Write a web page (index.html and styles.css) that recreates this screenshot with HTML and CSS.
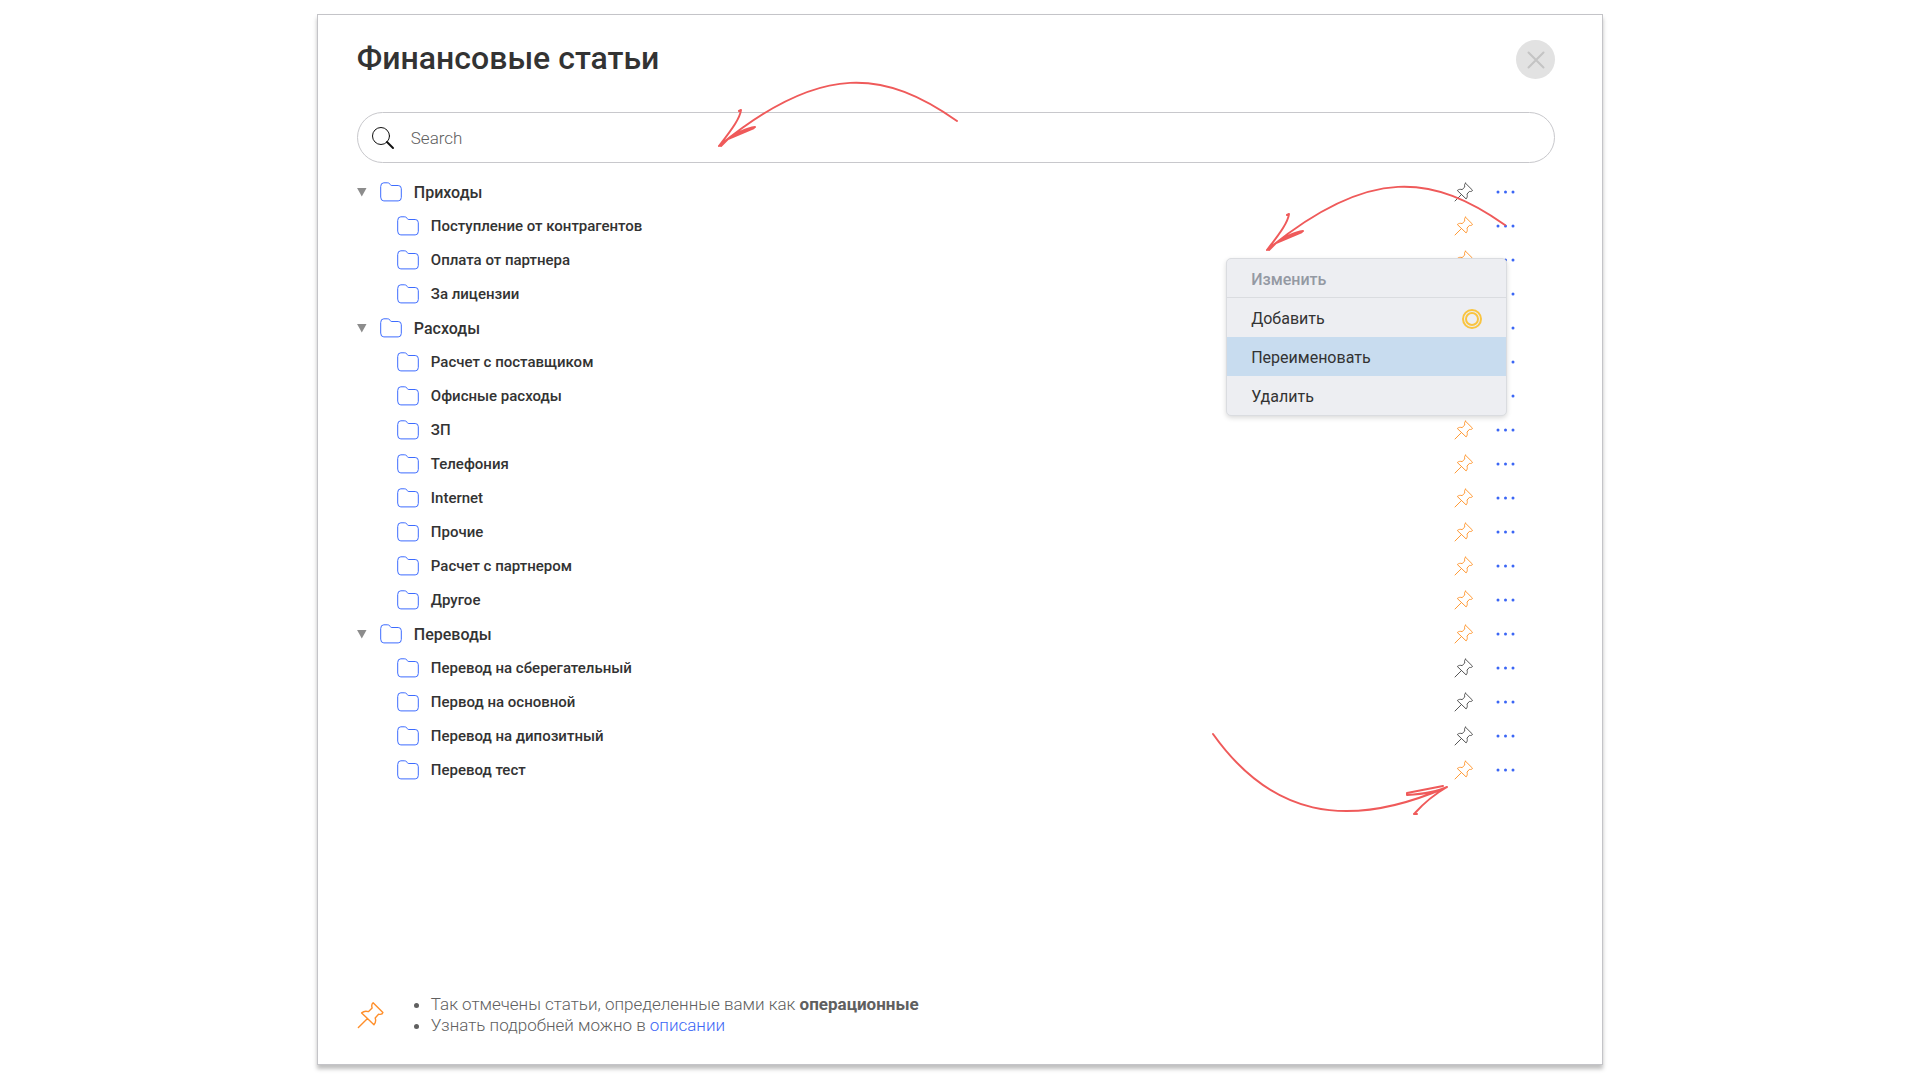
FILE: index.html
```html
<!DOCTYPE html>
<html lang="ru">
<head>
  <meta charset="UTF-8" />
  <meta name="viewport" content="width=device-width, initial-scale=1.0"/>
  <title>Финансовые статьи</title>
  <link rel="stylesheet" href="styles.css">
</head>
<body>

  <!-- Общие иконки -->
  <svg class="sprite" aria-hidden="true">
    <symbol id="folder" viewBox="0 0 22 20">
      <path d="M.7 4.2Q.7.8 3.8.8h3.4c1.6 0 2.6.6 3 1.700.3.8.8 1 1.600 1h6.400q3.100 0 3.100 3.200v8.800q0 3.400-3.100 3.400H3.800Q.7 18.900.7 15.500z"/>
    </symbol>
    <symbol id="pin" viewBox="0 0 20 20">
      <path d="M11.500 1.200l7 7c-.3 1.300-1.700 1.500-3.100 1.200l-2.400 2.700c.6 1.800.3 3.500-.9 4.800L3.300 8.500c1.400-1.200 3-1.500 4.800-.9l2.700-2.600c-.5-1.700-.3-3 .7-3.800zM7.500 12.500L1 19"/>
    </symbol>
    <symbol id="dots" viewBox="0 0 20 4">
      <circle cx="3" cy="2" r="1.500"/><circle cx="10.500" cy="2" r="1.500"/><circle cx="18" cy="2" r="1.500"/>
    </symbol>
    <symbol id="arrow" viewBox="0 0 246 70">
      <path d="M241 41C170-9 106-19 3 66M23 31l2-1c-1 8-8 18-22 36M39 47c-8 1-20 7-27 12l-7 7M38 48L12 59"/>
    </symbol>
  </svg>

  <main class="panel">
    <header class="panel-header">
      <h1>Финансовые статьи</h1>
      <button class="close" aria-label="Закрыть">
        <svg viewBox="0 0 18 18"><path d="M1.500 1.500l15 15M16.500 1.500l-15 15"/></svg>
      </button>
    </header>

    <div class="search">
      <label for="search" aria-label="Search">
        <svg viewBox="0 0 24 24"><circle cx="10" cy="10" r="8.500"/><path class="handle" d="M16 16l6 6"/></svg>
      </label>
      <input type="search" id="search" placeholder="Search" />
      <svg class="arrow arrow-search"><use href="#arrow"/></svg>
    </div>

    <!-- Дерево статей -->
    <ul class="tree">
      <li>
        <div class="row">
          <button class="toggle" aria-label="Свернуть"></button>
          <svg class="folder"><use href="#folder"/></svg>
          <span class="name">Приходы</span>
          <button class="pin off" aria-label="Отметить"><svg><use href="#pin"/></svg></button>
          <button class="more" aria-label="Меню"><svg><use href="#dots"/></svg></button>
        </div>
        <ul>
          <li class="row">
            <svg class="folder"><use href="#folder"/></svg>
            <span class="name">Поступление от контрагентов</span>
            <button class="pin" aria-label="Отметить"><svg><use href="#pin"/></svg></button>
            <button class="more" aria-label="Меню"><svg><use href="#dots"/></svg></button>
            <div class="menu">
              <div class="menu-title">Изменить</div>
              <button>Добавить
                <svg viewBox="0 0 20 20"><circle cx="10" cy="10" r="9"/><circle cx="10" cy="10" r="6"/></svg>
              </button>
              <button class="active">Переименовать</button>
              <button>Удалить</button>
            </div>
            <svg class="arrow arrow-menu"><use href="#arrow"/></svg>
          </li>
          <li class="row">
            <svg class="folder"><use href="#folder"/></svg>
            <span class="name">Оплата от партнера</span>
            <button class="pin" aria-label="Отметить"><svg><use href="#pin"/></svg></button>
            <button class="more" aria-label="Меню"><svg><use href="#dots"/></svg></button>
          </li>
          <li class="row">
            <svg class="folder"><use href="#folder"/></svg>
            <span class="name">За лицензии</span>
            <button class="pin" aria-label="Отметить"><svg><use href="#pin"/></svg></button>
            <button class="more" aria-label="Меню"><svg><use href="#dots"/></svg></button>
          </li>
        </ul>
      </li>
      <li>
        <div class="row">
          <button class="toggle" aria-label="Свернуть"></button>
          <svg class="folder"><use href="#folder"/></svg>
          <span class="name">Расходы</span>
          <button class="pin" aria-label="Отметить"><svg><use href="#pin"/></svg></button>
          <button class="more" aria-label="Меню"><svg><use href="#dots"/></svg></button>
        </div>
        <ul>
          <li class="row">
            <svg class="folder"><use href="#folder"/></svg>
            <span class="name">Расчет с поставщиком</span>
            <button class="pin" aria-label="Отметить"><svg><use href="#pin"/></svg></button>
            <button class="more" aria-label="Меню"><svg><use href="#dots"/></svg></button>
          </li>
          <li class="row">
            <svg class="folder"><use href="#folder"/></svg>
            <span class="name">Офисные расходы</span>
            <button class="pin" aria-label="Отметить"><svg><use href="#pin"/></svg></button>
            <button class="more" aria-label="Меню"><svg><use href="#dots"/></svg></button>
          </li>
          <li class="row">
            <svg class="folder"><use href="#folder"/></svg>
            <span class="name">ЗП</span>
            <button class="pin" aria-label="Отметить"><svg><use href="#pin"/></svg></button>
            <button class="more" aria-label="Меню"><svg><use href="#dots"/></svg></button>
          </li>
          <li class="row">
            <svg class="folder"><use href="#folder"/></svg>
            <span class="name">Телефония</span>
            <button class="pin" aria-label="Отметить"><svg><use href="#pin"/></svg></button>
            <button class="more" aria-label="Меню"><svg><use href="#dots"/></svg></button>
          </li>
          <li class="row">
            <svg class="folder"><use href="#folder"/></svg>
            <span class="name">Internet</span>
            <button class="pin" aria-label="Отметить"><svg><use href="#pin"/></svg></button>
            <button class="more" aria-label="Меню"><svg><use href="#dots"/></svg></button>
          </li>
          <li class="row">
            <svg class="folder"><use href="#folder"/></svg>
            <span class="name">Прочие</span>
            <button class="pin" aria-label="Отметить"><svg><use href="#pin"/></svg></button>
            <button class="more" aria-label="Меню"><svg><use href="#dots"/></svg></button>
          </li>
          <li class="row">
            <svg class="folder"><use href="#folder"/></svg>
            <span class="name">Расчет с партнером</span>
            <button class="pin" aria-label="Отметить"><svg><use href="#pin"/></svg></button>
            <button class="more" aria-label="Меню"><svg><use href="#dots"/></svg></button>
          </li>
          <li class="row">
            <svg class="folder"><use href="#folder"/></svg>
            <span class="name">Другое</span>
            <button class="pin" aria-label="Отметить"><svg><use href="#pin"/></svg></button>
            <button class="more" aria-label="Меню"><svg><use href="#dots"/></svg></button>
          </li>
        </ul>
      </li>
      <li>
        <div class="row">
          <button class="toggle" aria-label="Свернуть"></button>
          <svg class="folder"><use href="#folder"/></svg>
          <span class="name">Переводы</span>
          <button class="pin" aria-label="Отметить"><svg><use href="#pin"/></svg></button>
          <button class="more" aria-label="Меню"><svg><use href="#dots"/></svg></button>
        </div>
        <ul>
          <li class="row">
            <svg class="folder"><use href="#folder"/></svg>
            <span class="name">Перевод на сберегательный</span>
            <button class="pin off" aria-label="Отметить"><svg><use href="#pin"/></svg></button>
            <button class="more" aria-label="Меню"><svg><use href="#dots"/></svg></button>
          </li>
          <li class="row">
            <svg class="folder"><use href="#folder"/></svg>
            <span class="name">Первод на основной</span>
            <button class="pin off" aria-label="Отметить"><svg><use href="#pin"/></svg></button>
            <button class="more" aria-label="Меню"><svg><use href="#dots"/></svg></button>
          </li>
          <li class="row">
            <svg class="folder"><use href="#folder"/></svg>
            <span class="name">Перевод на дипозитный</span>
            <button class="pin off" aria-label="Отметить"><svg><use href="#pin"/></svg></button>
            <button class="more" aria-label="Меню"><svg><use href="#dots"/></svg></button>
          </li>
          <li class="row">
            <svg class="folder"><use href="#folder"/></svg>
            <span class="name">Перевод тест</span>
            <button class="pin" aria-label="Отметить"><svg><use href="#pin"/></svg></button>
            <button class="more" aria-label="Меню"><svg><use href="#dots"/></svg></button>
            <svg class="arrow arrow-pin" viewBox="0 0 242 90">
              <path d="M3 4C60 84 134 102 237 57M233 56L197 63v2c16-1 30-3 40-8-12 7-24 17-32 26l-1 1h3"/>
            </svg>
          </li>
        </ul>
      </li>
    </ul>

    <footer class="legend">
      <svg class="legend-pin"><use href="#pin"/></svg>
      <ul>
        <li>Так отмечены статьи, определенные вами как <b>операционные</b></li>
        <li>Узнать подробней можно в <a href="#">описании</a></li>
      </ul>
    </footer>
  </main>

</body>
</html>
```
FILE: styles.css
```css
:root {
  --text-color: #333333;
  --muted-color: #606060;
  --blue: #3b66f5;
  --orange: #ff9a36;
  --red: #ef5a5a;
}

* {
  box-sizing: border-box;
}

body {
  margin: 0;
  min-height: 100vh;
  padding: 14px 0 15px;
  display: flex;
  justify-content: center;
  background: #fff;
  color: var(--text-color);
  font-family: Roboto, "Liberation Sans", sans-serif;
}

ul {
  list-style: none;
  margin: 0;
  padding: 0;
}

button {
  margin: 0;
  padding: 0;
  border: none;
  background: none;
  color: inherit;
  font: inherit;
  cursor: pointer;
}

svg {
  display: block;
  fill: none;
  stroke-linecap: round;
  stroke-linejoin: round;
}

.sprite {
  position: absolute;
  width: 0;
  height: 0;
}

.panel {
  display: flex;
  flex-direction: column;
  width: 67%;
  padding: 25px 47px 28px 39px;
  border: 1px solid #c4c4c8;
  box-shadow: 0 4px 4px rgba(0, 0, 0, 0.25);
}

.panel-header {
  display: flex;
  justify-content: space-between;
  align-items: flex-start;
  height: 40px;
  margin-bottom: 32px;
}

h1 {
  margin: 0;
  font-size: 32px;
  line-height: 36px;
  font-weight: 500;
}

.close {
  display: flex;
  justify-content: center;
  align-items: center;
  width: 39px;
  height: 39px;
  border-radius: 50%;
  background: #e2e2e2;
}

.close svg {
  width: 18px;
  height: 18px;
  stroke: #c4c4c4;
  stroke-width: 2;
}

/* Поиск */
.search {
  position: relative;
  display: flex;
  align-items: center;
  gap: 14px;
  height: 51px;
  padding: 0 24px 0 13px;
  border: 1px solid #c8c8cc;
  border-radius: 26px;
}

.search label svg {
  width: 24px;
  height: 24px;
  stroke: #111;
}

.search .handle {
  stroke-width: 2;
}

.search input {
  flex: 1;
  border: none;
  outline: none;
  background: none;
  color: var(--text-color);
  font-family: inherit;
  font-size: 17px;
  font-weight: 300;
}

.search input::placeholder {
  color: var(--muted-color);
}

/* Дерево */
.tree {
  margin: 12px 40px 0 0;
}

.tree ul {
  padding-left: 40px;
}

.row {
  position: relative;
  display: flex;
  align-items: center;
  height: 34px;
  font-size: 16px;
  font-weight: 500;
}

.tree ul .row {
  font-size: 15px;
}

.toggle {
  width: 10px;
  height: 9px;
  margin-right: 13px;
  background: #8c8c8c;
  clip-path: polygon(0 0, 100% 0, 50% 100%);
}

.folder {
  width: 22px;
  height: 20px;
  margin-right: 12px;
  stroke: #3d6cff;
}

.name {
  flex: 1;
}

.pin svg {
  width: 20px;
  height: 20px;
  stroke: var(--orange);
}

.pin.off svg {
  stroke: #555;
}

.more {
  margin-left: 21px;
}

.more svg {
  width: 20px;
  height: 4px;
  fill: var(--blue);
}

/* Контекстное меню */
.menu {
  position: absolute;
  top: 49px;
  right: 8px;
  z-index: 1;
  width: 281px;
  border: 1px solid #dadce0;
  border-radius: 5px;
  background: #edeef2;
  box-shadow: 0 2px 5px rgba(0, 0, 0, 0.15);
  font-size: 16px;
  font-weight: 400;
}

.menu-title,
.menu button {
  display: flex;
  justify-content: space-between;
  align-items: center;
  width: 100%;
  height: 39px;
  padding: 2px 24px 0;
}

.menu-title {
  border-bottom: 1px solid #dadce0;
  color: #9499a3;
  font-weight: 500;
}

.menu .active {
  background: #c8dcef;
}

.menu svg {
  width: 20px;
  height: 20px;
  stroke: #f9c440;
  stroke-width: 2;
}

/* Стрелки-подсказки */
.arrow {
  position: absolute;
  z-index: 2;
  width: 246px;
  height: 70px;
  stroke: var(--red);
  stroke-width: 2;
  pointer-events: none;
}

.arrow-search {
  top: -33px;
  left: 358px;
}

.arrow-menu {
  top: -25px;
  right: 5px;
}

.arrow-pin {
  top: -23px;
  right: 63px;
  width: 242px;
  height: 90px;
}

.legend {
  display: flex;
  align-items: center;
  margin-top: auto;
  color: var(--muted-color);
  font-size: 17px;
  line-height: 21px;
  font-weight: 300;
}

.legend-pin {
  width: 28px;
  height: 28px;
  stroke: #ff8f2b;
}

.legend ul {
  margin-left: 46px;
  list-style: disc;
}

.legend b {
  font-weight: 700;
}

.legend a {
  color: var(--blue);
  text-decoration: none;
}
```
